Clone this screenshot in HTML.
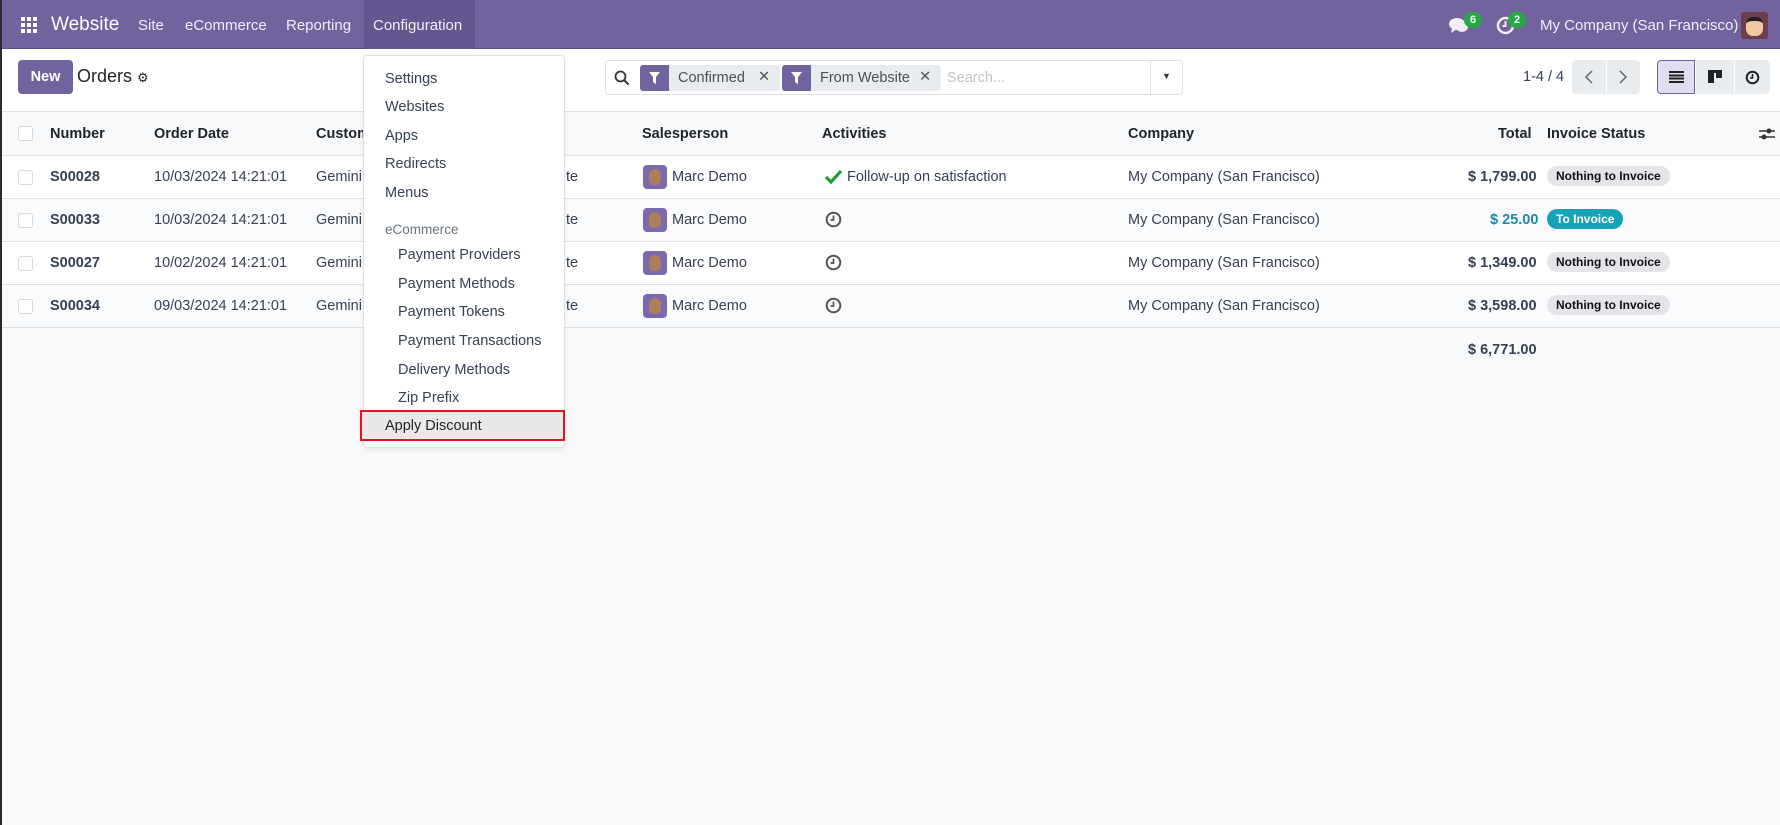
<!DOCTYPE html>
<html><head><meta charset="utf-8">
<style>
*{box-sizing:border-box;margin:0;padding:0}
body{width:1780px;height:825px;overflow:hidden;font-family:"Liberation Sans",sans-serif;font-size:14.5px;color:#374151;background:#f9fafb;position:relative;border-left:2px solid #2b2b2b}
.abs{position:absolute}
.nav{position:absolute;left:0;top:0;width:1780px;height:49px;background:#71639e;color:#fff;border-bottom:1px solid #5d5086}
.nav span{position:absolute;top:17px;font-size:15px;color:#f1eef8}
.cp{position:absolute;left:0;top:49px;width:1780px;height:63px;background:#fff;border-bottom:1px solid #dee2e6}
.th{position:absolute;left:0;top:112px;width:1780px;height:44px;background:#f8f9fa;border-bottom:1px solid #dee2e6}
.th b{position:absolute;top:14px;font-size:14.5px;color:#212529}
.row{position:absolute;left:0;width:1780px;height:43px;border-bottom:1px solid #dee2e6;background:#fff}
.row span{position:absolute;top:13px;white-space:nowrap}
.cb{position:absolute;left:16px;width:15px;height:15px;border:1px solid #d6d9dd;border-radius:3px;background:#fff}
.av{position:absolute;width:24px;height:24px;border-radius:4px;background:#7c6ab0;top:9px;left:641px}
.av::after{content:"";position:absolute;left:6px;top:4px;width:12px;height:16px;border-radius:6px 6px 5px 5px;background:#b07d5a}
.badge{position:absolute;top:10px;left:1545px;height:20px;border-radius:10px;background:#e3e5e8;color:#111;font-weight:bold;font-size:12px;padding:3px 9px}
.clk{position:absolute;left:823px;top:12px}
.dd{position:absolute;left:361px;top:55px;width:202px;height:393px;background:#fff;border:1px solid #dde0e4;border-radius:4px;box-shadow:0 2px 6px rgba(0,0,0,.08)}
.dd div{position:absolute;font-size:14.5px;color:#374151}
.fil{position:absolute;left:0;top:0;width:29px;height:26px;background:#71639e;border-radius:3px 0 0 3px}
</style></head><body>
<div class="nav">
 <svg class="abs" style="left:19px;top:17px" width="16" height="16"><g fill="#fff"><rect x="0" y="0" width="4" height="4"/><rect x="6" y="0" width="4" height="4"/><rect x="12" y="0" width="4" height="4"/><rect x="0" y="6" width="4" height="4"/><rect x="6" y="6" width="4" height="4"/><rect x="12" y="6" width="4" height="4"/><rect x="0" y="12" width="4" height="4"/><rect x="6" y="12" width="4" height="4"/><rect x="12" y="12" width="4" height="4"/></g></svg>
 <span style="left:49px;top:14px;font-size:19px;color:#fff">Website</span>
 <span style="left:136px">Site</span>
 <span style="left:183px">eCommerce</span>
 <span style="left:284px">Reporting</span>
 <div class="abs" style="left:362px;top:0;width:111px;height:49px;background:#65568f"></div>
 <span style="left:371px">Configuration</span>
 <svg class="abs" style="left:1447px;top:17px" width="20" height="17"><ellipse cx="8" cy="7" rx="8" ry="6" fill="#f1eef8"/><path d="M3 11 L2 16 L8 12Z" fill="#f1eef8"/><ellipse cx="13" cy="10" rx="6" ry="5" fill="#f1eef8"/></svg>
 <div class="abs" style="left:1462px;top:12px;width:18px;height:16px;background:#28a745;border-radius:9px;font-size:11px;text-align:center;line-height:16px;font-weight:bold">6</div>
 <svg class="abs" style="left:1494px;top:16px" width="19" height="19"><circle cx="9.5" cy="9.5" r="7.5" fill="none" stroke="#f1eef8" stroke-width="2.5"/><path d="M9.5 5v5h-3" fill="none" stroke="#f1eef8" stroke-width="2"/></svg>
 <div class="abs" style="left:1506px;top:12px;width:18px;height:16px;background:#28a745;border-radius:9px;font-size:11px;text-align:center;line-height:16px;font-weight:bold">2</div>
 <span style="left:1538px">My Company (San Francisco)</span>
 <div class="abs" style="left:1739px;top:12px;width:27px;height:27px;background:#6d3e4e;border-radius:3px"><div class="abs" style="left:5px;top:5px;width:17px;height:19px;background:#f2c8a0;border-radius:7px;border-top:4px solid #222"></div></div>
</div>
<div class="cp">
 <div class="abs" style="left:16px;top:11px;width:55px;height:34px;background:#71639e;border-radius:4px;color:#fff;font-weight:bold;font-size:14.5px;text-align:center;line-height:34px">New</div>
 <div class="abs" style="left:75px;top:17px;font-size:18px;color:#212529">Orders <span style="font-size:13px">&#9881;</span></div>
 <div class="abs" style="left:603px;top:11px;width:578px;height:35px;border:1px solid #dee2e6;border-radius:4px;background:#fff">
  <svg class="abs" style="left:8px;top:9px" width="16" height="16"><circle cx="6.5" cy="6.5" r="5" fill="none" stroke="#333" stroke-width="1.8"/><path d="M10 10l4.5 4.5" stroke="#333" stroke-width="2"/></svg>
  <div class="abs" style="left:34px;top:4px;width:140px;height:26px;background:#e9ecef;border-radius:3px"><div class="fil"><svg class="abs" style="left:9px;top:7px" width="11" height="12"><path d="M0 0h11L7 5v7L4 10V5Z" fill="#fff"/></svg></div><span class="abs" style="left:38px;top:5px;color:#495057">Confirmed</span><span class="abs" style="left:118px;top:4px;color:#555">&#10005;</span></div>
  <div class="abs" style="left:176px;top:4px;width:159px;height:26px;background:#e9ecef;border-radius:3px"><div class="fil"><svg class="abs" style="left:9px;top:7px" width="11" height="12"><path d="M0 0h11L7 5v7L4 10V5Z" fill="#fff"/></svg></div><span class="abs" style="left:38px;top:5px;color:#495057">From Website</span><span class="abs" style="left:137px;top:4px;color:#555">&#10005;</span></div>
  <span class="abs" style="left:341px;top:9px;color:#c0c4c9">Search...</span>
  <div class="abs" style="left:544px;top:0;width:1px;height:33px;background:#dee2e6"></div>
  <span class="abs" style="left:556px;top:10px;font-size:9px;color:#333">&#9660;</span>
 </div>
 <span class="abs" style="left:1521px;top:20px;color:#374151">1-4 / 4</span>
 <div class="abs" style="left:1570px;top:11px;width:68px;height:34px;background:#e9ecef;border-radius:4px;color:#555;font-size:18px"><svg class="abs" style="left:12px;top:10px" width="10" height="14"><path d="M8 1L2 7l6 6" fill="none" stroke="#666" stroke-width="1.5"/></svg><span class="abs" style="left:34px;top:0;width:1px;height:34px;background:#fff"></span><svg class="abs" style="left:46px;top:10px" width="10" height="14"><path d="M2 1l6 6-6 6" fill="none" stroke="#666" stroke-width="1.5"/></svg></div>
 <div class="abs" style="left:1655px;top:11px;width:38px;height:34px;background:#e0def0;border:1px solid #71639e;border-radius:4px 0 0 4px"><div class="abs" style="left:11px;top:10px;width:15px;height:12px;background:repeating-linear-gradient(#222 0 2px,transparent 2px 3.3px)"></div></div>
 <div class="abs" style="left:1694px;top:11px;width:38px;height:34px;background:#e9ecef"><div class="abs" style="left:12px;top:10px;width:14px;height:13px;border-top:3px solid #222;border-left:6px solid #222"></div><div class="abs" style="left:20px;top:13px;width:6px;height:5px;background:#222"></div></div>
 <div class="abs" style="left:1733px;top:11px;width:35px;height:34px;background:#e9ecef;border-radius:0 4px 4px 0"><svg class="abs" style="left:10px;top:10px" width="15" height="15"><circle cx="7.5" cy="7.5" r="5.8" fill="none" stroke="#222" stroke-width="2"/><path d="M7.5 4v4h-2.5" fill="none" stroke="#222" stroke-width="1.6"/></svg></div>
</div>
<div class="th">
 <div class="cb" style="top:14px"></div>
 <b style="left:48px">Number</b><b style="left:152px">Order Date</b><b style="left:314px">Customer</b>
 <b style="left:640px">Salesperson</b><b style="left:820px">Activities</b><b style="left:1126px">Company</b>
 <b style="left:1496px">Total</b><b style="left:1545px">Invoice Status</b>
 <svg class="abs" style="left:1757px;top:14px" width="16" height="16"><path d="M0 5h16M0 11h16" stroke="#333" stroke-width="1.5"/><circle cx="10" cy="5" r="2.5" fill="#333"/><circle cx="5" cy="11" r="2.5" fill="#333"/></svg>
</div>
<div class="row" style="top:156px">
 <div class="cb" style="top:14px"></div><span style="left:48px;font-weight:bold">S00028</span><span style="left:152px">10/03/2024 14:21:01</span><span style="left:314px">Gemini Furniture</span><span style="left:524px">Website</span>
 <div class="av"></div><span style="left:670px">Marc Demo</span>
 <svg class="abs" style="left:823px;top:14px" width="17" height="14"><path d="M1 7l5 5L16 1" fill="none" stroke="#1f9d3a" stroke-width="3.2"/></svg><span style="left:845px">Follow-up on satisfaction</span>
 <span style="left:1126px">My Company (San Francisco)</span><span style="left:1466px;font-weight:bold">$ 1,799.00</span><div class="badge">Nothing to Invoice</div>
</div>
<div class="row" style="top:199px;background:#fafbfc">
 <div class="cb" style="top:14px"></div><span style="left:48px;font-weight:bold">S00033</span><span style="left:152px">10/03/2024 14:21:01</span><span style="left:314px">Gemini Furniture</span><span style="left:524px">Website</span>
 <div class="av"></div><span style="left:670px">Marc Demo</span><svg class="clk" width="17" height="17"><circle cx="8.5" cy="8.5" r="6.8" fill="none" stroke="#555" stroke-width="2"/><path d="M8.5 4.5v4.5h-3" fill="none" stroke="#555" stroke-width="1.7"/></svg>
 <span style="left:1126px">My Company (San Francisco)</span><span style="left:1488px;font-weight:bold;color:#1a8aa8">$ 25.00</span><div class="badge" style="background:#17a2b8;color:#fff">To Invoice</div>
</div>
<div class="row" style="top:242px">
 <div class="cb" style="top:14px"></div><span style="left:48px;font-weight:bold">S00027</span><span style="left:152px">10/02/2024 14:21:01</span><span style="left:314px">Gemini Furniture</span><span style="left:524px">Website</span>
 <div class="av"></div><span style="left:670px">Marc Demo</span><svg class="clk" width="17" height="17"><circle cx="8.5" cy="8.5" r="6.8" fill="none" stroke="#555" stroke-width="2"/><path d="M8.5 4.5v4.5h-3" fill="none" stroke="#555" stroke-width="1.7"/></svg>
 <span style="left:1126px">My Company (San Francisco)</span><span style="left:1466px;font-weight:bold">$ 1,349.00</span><div class="badge">Nothing to Invoice</div>
</div>
<div class="row" style="top:285px;background:#fafbfc">
 <div class="cb" style="top:14px"></div><span style="left:48px;font-weight:bold">S00034</span><span style="left:152px">09/03/2024 14:21:01</span><span style="left:314px">Gemini Furniture</span><span style="left:524px">Website</span>
 <div class="av"></div><span style="left:670px">Marc Demo</span><svg class="clk" width="17" height="17"><circle cx="8.5" cy="8.5" r="6.8" fill="none" stroke="#555" stroke-width="2"/><path d="M8.5 4.5v4.5h-3" fill="none" stroke="#555" stroke-width="1.7"/></svg>
 <span style="left:1126px">My Company (San Francisco)</span><span style="left:1466px;font-weight:bold">$ 3,598.00</span><div class="badge">Nothing to Invoice</div>
</div>
<span class="abs" style="left:1466px;top:342px;font-weight:bold">$ 6,771.00</span>
<div class="dd">
 <div style="left:21px;top:15px">Settings</div>
 <div style="left:21px;top:43px">Websites</div>
 <div style="left:21px;top:72px">Apps</div>
 <div style="left:21px;top:100px">Redirects</div>
 <div style="left:21px;top:129px">Menus</div>
 <div style="left:21px;top:166px;font-size:13.5px;color:#6c757d">eCommerce</div>
 <div style="left:34px;top:191px">Payment Providers</div>
 <div style="left:34px;top:220px">Payment Methods</div>
 <div style="left:34px;top:248px">Payment Tokens</div>
 <div style="left:34px;top:277px">Payment Transactions</div>
 <div style="left:34px;top:306px">Delivery Methods</div>
 <div style="left:34px;top:334px">Zip Prefix</div>
 <div style="left:-4px;top:354px;width:205px;height:31px;background:#e9e9e9;border:2px solid #e8121e"></div>
 <div style="left:21px;top:362px;color:#212529">Apply Discount</div>
</div>
</body></html>
